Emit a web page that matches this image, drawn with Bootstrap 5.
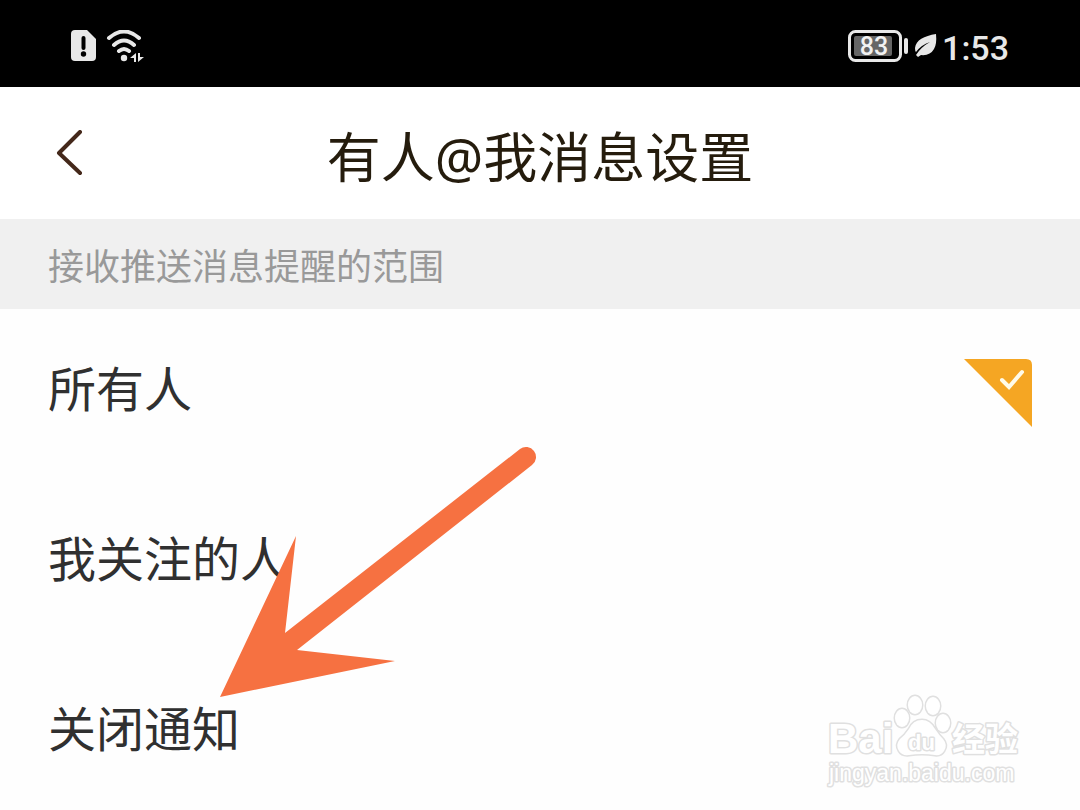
<!DOCTYPE html>
<html lang="zh-CN">
<head>
<meta charset="utf-8">
<meta name="viewport" content="width=device-width, initial-scale=1">
<title>有人@我消息设置</title>
<link href="https://cdn.jsdelivr.net/npm/bootstrap@5.3.0/dist/css/bootstrap.min.css" rel="stylesheet">
<style>
  body { font-family: "Noto Sans CJK SC", sans-serif; background: #fefefe; color: #303030; }
  .status-bar { height: 87px; padding: 4px 71px 0 71px; background: #000; color: #e8e8e8; }
  .clock { font: 500 34px/40px Roboto, sans-serif; padding-top: 4px; }
  .title-bar { height: 132px; padding: 0 48px; background: #fff; color: #251c0d; }
  .title-bar h1 { font-family: "Noto Sans", "Noto Sans CJK SC", sans-serif; font-size: 54px; line-height: 72px; padding-top: 8px; }
  .back-btn { width: 44px; color: #44281a; }
  .section-label { height: 90px; padding: 0 48px; background: #f0f0f0; color: #999; font-size: 36px; line-height: 48px; }
  .options { gap: 16px; }
  .option { height: 154px; padding: 0 48px; font-size: 48px; line-height: 64px; cursor: pointer; }
  .option .tick { visibility: hidden; margin-top: 14px; }
  .btn-check:checked + .option .tick { visibility: visible; }
  .arrow { left: 215px; top: 133px; pointer-events: none; }
  .watermark { right: 55px; top: 383px; pointer-events: none; }
  .watermark .outline { fill: #fff; stroke: #e0e0e0; stroke-width: 3px; stroke-linejoin: round; paint-order: stroke; }
</style>
</head>
<body>
<div class="status-bar d-flex align-items-center justify-content-between">
  <div class="d-flex align-items-center gap-2">
    <svg width="26" height="32" viewBox="0 0 26 32" aria-label="SIM"><path fill="#e8e8e8" d="M4 0h12l9 9v18q0 4-4 4H4q-4 0-4-4V4q0-4 4-4z"/><path d="M12.500 8v10" stroke="#000" stroke-width="4" stroke-linecap="round"/><circle cx="12.500" cy="24" r="2.700"/></svg>
    <svg width="40" height="32" viewBox="0 0 40 32" fill="none" stroke="#e8e8e8" stroke-width="4" stroke-linecap="round" aria-label="Wi-Fi"><path d="M4 8Q19-5 34 8M9 15q10-9 20 0M14 21q5-4 10 0"/><circle cx="19" cy="28" r="3.200" fill="#e8e8e8" stroke="none"/><path d="M31 23v9h-2v-4h-4zM33 32v-9h2v4h4z" fill="#e8e8e8" stroke="none"/></svg>
  </div>
  <div class="d-flex align-items-center">
    <svg width="62" height="34" viewBox="0 0 62 34" aria-label="电量"><rect x="1.500" y="2.500" width="51" height="29" rx="6" fill="none" stroke="#e8e8e8" stroke-width="3"/><rect x="6" y="7" width="38" height="20" rx="2" fill="#666"/><path d="M58 11v12" stroke="#e8e8e8" stroke-width="4" stroke-linecap="round"/><text x="26" y="26" text-anchor="middle" fill="#f2f2f2" font-family="Roboto" font-weight="500" font-size="25">83</text></svg>
    <svg width="24" height="24" viewBox="0 0 24 24" class="mx-1" aria-label="省电"><path d="M22 0C10 2 2 6 1 14q0 3 1 4Q7 11 16 8 7 13 2 21l2 2 3-2q9 1 13-6 3-5 2-15z" fill="#e8e8e8"/></svg>
    <span class="clock">1:53</span>
  </div>
</div>

<header class="title-bar d-flex align-items-center">
  <button type="button" class="back-btn btn p-0 border-0 d-flex" aria-label="返回">
    <svg width="44" height="46" viewBox="0 0 44 46" fill="none" stroke="currentColor" stroke-width="4" stroke-linecap="round" stroke-linejoin="round"><path d="M32 2 11 23l21 20"/></svg>
  </button>
  <h1 class="flex-grow-1 text-center fw-normal m-0">有人@我消息设置</h1>
  <span class="back-btn"></span>
</header>

<div class="section-label d-flex align-items-center" id="scope">接收推送消息提醒的范围</div>

<main class="position-relative">
  <div class="options d-flex flex-column" role="radiogroup" aria-labelledby="scope">
    <input class="btn-check" type="radio" name="range" id="all" checked>
    <label class="option d-flex align-items-center justify-content-between" for="all">所有人
      <svg class="tick" width="68" height="68" viewBox="0 0 68 68"><path d="M0 0h62q6 0 6 6v62z" fill="#f5a623"/><path d="m38 21 7 7 13-15" fill="none" stroke="#fffbe8" stroke-width="4" stroke-linecap="round"/></svg></label>
    <input class="btn-check" type="radio" name="range" id="followed">
    <label class="option d-flex align-items-center" for="followed">我关注的人</label>
    <input class="btn-check" type="radio" name="range" id="off">
    <label class="option d-flex align-items-center" for="off">关闭通知</label>
  </div>

  <svg class="arrow position-absolute" width="326" height="260" viewBox="215 442 326 260"><path fill="#f67141" d="M220 697 296 536 285 633 520 449A10 10 0 0 1 532 465L297 650 395 661z"/></svg>

  <svg class="watermark position-absolute" width="200" height="100" viewBox="825 692 200 100" aria-label="百度经验">
    <g class="outline">
      <text x="828" y="753" font-family="Liberation Sans" font-weight="700" font-size="42">Bai</text>
      <ellipse cx="902" cy="718" rx="7" ry="9"/><ellipse cx="915" cy="705" rx="7" ry="9"/><ellipse cx="933" cy="706" rx="7" ry="9"/><ellipse cx="943" cy="723" rx="7" ry="9"/>
      <path d="M922 720q8 0 13 9 4 6 8 10 5 6 1 12-3 5-9 4-13-2-26 0-7 1-10-4-4-6 1-12 5-4 9-10 4-9 13-9z"/>
      <text x="908" y="750" font-family="Liberation Sans" font-size="22" font-weight="700">du</text>
      <text x="952" y="751" font-family="Noto Sans CJK SC" font-weight="700" font-size="33">经验</text>
      <text x="829" y="781" font-family="Liberation Sans" font-size="23">jingyan.baidu.com</text>
    </g>
  </svg>
</main>
<script src="https://cdn.jsdelivr.net/npm/bootstrap@5.3.0/dist/js/bootstrap.bundle.min.js"></script>
</body>
</html>
